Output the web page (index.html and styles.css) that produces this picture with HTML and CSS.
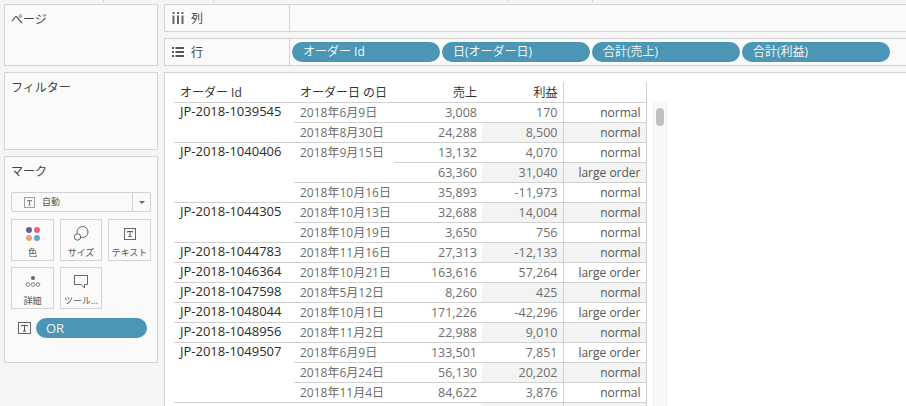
FILE: index.html
```html
<!DOCTYPE html>
<html lang="ja">
  <head>
    <meta charset="UTF-8" />
    <title>Tableau Sheet</title>
    <link rel="stylesheet" href="styles.css">
  </head>
  <body>
    <div class="ticks">
      <span class="tick tick-a"></span>
      <span class="tick tick-b"></span>
      <span class="tick tick-c"></span>
      <span class="tick tick-d"></span>
    </div>

    <div class="workspace">
      <div class="sidebar">
        <div class="card card-pages">ページ</div>
        <div class="card card-filters">フィルター</div>
        <div class="card card-marks">
          <div class="marks-title">マーク</div>
          <div class="mark-select">
            <svg class="select-icon" width="11" height="11" viewBox="0 0 11 11">
              <rect x="0.5" y="0.5" width="10" height="10" fill="none" stroke="#a0a0a0" />
              <path d="M3.5 3.5h4M5.5 3.5v4.5M4.5 8h2M3.5 3.5v1M7.5 3.5v1" fill="none" stroke="#777" />
            </svg>
            <span class="select-label">自動</span>
            <span class="select-arrow"><i></i></span>
          </div>
          <div class="mark-grid">
            <div class="mark-btn">
              <svg width="18" height="18" viewBox="0 0 18 18">
                <circle cx="5" cy="5" r="3" fill="#6f5b9c" />
                <circle cx="13" cy="5" r="3" fill="#e2637b" />
                <circle cx="5" cy="13" r="3" fill="#f1a56e" />
                <circle cx="13" cy="13" r="3" fill="#6b9fd1" />
              </svg>
              <span>色</span>
            </div>
            <div class="mark-btn">
              <svg width="18" height="18" viewBox="0 0 18 18">
                <circle cx="10.5" cy="7" r="5.5" fill="none" stroke="#666" />
                <circle cx="5.5" cy="12" r="3.2" fill="#fafafa" stroke="#666" />
              </svg>
              <span>サイズ</span>
            </div>
            <div class="mark-btn">
              <svg width="18" height="18" viewBox="0 0 18 18">
                <rect x="3.5" y="3.5" width="11" height="11" fill="none" stroke="#666" />
                <path d="M6.5 6.5h5M9 6.5v5M7.5 11.5h3M6.5 6.5v1M11.5 6.5v1" fill="none" stroke="#555" />
              </svg>
              <span>テキスト</span>
            </div>
            <div class="mark-btn">
              <svg width="18" height="18" viewBox="0 0 18 18">
                <circle cx="9" cy="5" r="2" fill="#666" />
                <circle cx="4" cy="11.5" r="1.8" fill="none" stroke="#666" stroke-width="0.8" />
                <circle cx="9" cy="11.5" r="1.8" fill="none" stroke="#666" stroke-width="0.8" />
                <circle cx="14" cy="11.5" r="1.8" fill="none" stroke="#666" stroke-width="0.8" />
              </svg>
              <span>詳細</span>
            </div>
            <div class="mark-btn">
              <svg width="18" height="18" viewBox="0 0 18 18">
                <path d="M2.5 2.5h13v9h-3v3.5l-3.5-3.5h-6.500z" fill="none" stroke="#666" />
              </svg>
              <span>ツール...</span>
            </div>
          </div>
          <div class="mark-field">
            <svg width="13" height="13" viewBox="0 0 13 13">
              <rect x="0.5" y="0.5" width="12" height="11" fill="none" stroke="#666" />
              <path d="M3.500 3.500h6M6.500 3.500v5.500M5 9h3M3.500 3.500v1M9.500 3.500v1" fill="none" stroke="#555" />
            </svg>
            <div class="pill pill-or">OR</div>
          </div>
        </div>
      </div>

      <div class="main">
        <div class="shelf">
          <div class="shelf-label">
            <svg width="12" height="12" viewBox="0 0 12 12">
              <path d="M1.500 0v2M6 0v2M10.500 0v2" stroke="#666" stroke-width="2" />
              <path d="M1.500 3.500v8.500M6 3.500v8.500M10.500 3.500v8.500" stroke="#666" stroke-width="2" />
            </svg>
            <span>列</span>
          </div>
          <div class="shelf-body"></div>
        </div>
        <div class="shelf">
          <div class="shelf-label">
            <svg width="12" height="12" viewBox="0 0 12 12">
              <path d="M0 2h2M0 6h2M0 10h2" stroke="#555" stroke-width="2" />
              <path d="M3.500 2h8.500M3.500 6h8.500M3.500 10h8.500" stroke="#555" stroke-width="2" />
            </svg>
            <span>行</span>
          </div>
          <div class="shelf-body">
            <div class="pill">オーダー Id</div>
            <div class="pill">日(オーダー日)</div>
            <div class="pill">合計(売上)</div>
            <div class="pill">合計(利益)</div>
          </div>
        </div>

        <div class="view">
          <table class="crosstab">
            <colgroup>
              <col class="col-id" />
              <col class="col-date" />
              <col class="col-sales" />
              <col class="col-profit" />
              <col class="col-flag" />
            </colgroup>
            <thead>
              <tr>
                <th class="left">オーダー Id</th>
                <th class="left">オーダー日 の日</th>
                <th>売上</th>
                <th>利益</th>
                <th class="flag"></th>
              </tr>
            </thead>
            <tbody>
              <tr>
                <td class="id" rowspan="2">JP-2018-1039545</td>
                <td class="date">2018年6月9日</td>
                <td>3,008</td><td class="shade">170</td><td class="shade flag">normal</td>
              </tr>
              <tr class="band">
                <td class="date">2018年8月30日</td>
                <td>24,288</td><td class="shade">8,500</td><td class="shade flag">normal</td>
              </tr>
              <tr>
                <td class="id" rowspan="3">JP-2018-1040406</td>
                <td class="date" rowspan="2">2018年9月15日</td>
                <td>13,132</td><td class="shade">4,070</td><td class="shade flag">normal</td>
              </tr>
              <tr class="band">
                <td>63,360</td><td class="shade">31,040</td><td class="shade flag">large order</td>
              </tr>
              <tr>
                <td class="date">2018年10月16日</td>
                <td>35,893</td><td class="shade">-11,973</td><td class="shade flag">normal</td>
              </tr>
              <tr class="band">
                <td class="id" rowspan="2">JP-2018-1044305</td>
                <td class="date">2018年10月13日</td>
                <td>32,688</td><td class="shade">14,004</td><td class="shade flag">normal</td>
              </tr>
              <tr>
                <td class="date">2018年10月19日</td>
                <td>3,650</td><td class="shade">756</td><td class="shade flag">normal</td>
              </tr>
              <tr class="band">
                <td class="id">JP-2018-1044783</td>
                <td class="date">2018年11月16日</td>
                <td>27,313</td><td class="shade">-12,133</td><td class="shade flag">normal</td>
              </tr>
              <tr>
                <td class="id">JP-2018-1046364</td>
                <td class="date">2018年10月21日</td>
                <td>163,616</td><td class="shade">57,264</td><td class="shade flag">large order</td>
              </tr>
              <tr class="band">
                <td class="id">JP-2018-1047598</td>
                <td class="date">2018年5月12日</td>
                <td>8,260</td><td class="shade">425</td><td class="shade flag">normal</td>
              </tr>
              <tr>
                <td class="id">JP-2018-1048044</td>
                <td class="date">2018年10月1日</td>
                <td>171,226</td><td class="shade">-42,296</td><td class="shade flag">large order</td>
              </tr>
              <tr class="band">
                <td class="id">JP-2018-1048956</td>
                <td class="date">2018年11月2日</td>
                <td>22,988</td><td class="shade">9,010</td><td class="shade flag">normal</td>
              </tr>
              <tr>
                <td class="id" rowspan="3">JP-2018-1049507</td>
                <td class="date">2018年6月9日</td>
                <td>133,501</td><td class="shade">7,851</td><td class="shade flag">large order</td>
              </tr>
              <tr class="band">
                <td class="date">2018年6月24日</td>
                <td>56,130</td><td class="shade">20,202</td><td class="shade flag">normal</td>
              </tr>
              <tr>
                <td class="date">2018年11月4日</td>
                <td>84,622</td><td class="shade">3,876</td><td class="shade flag">normal</td>
              </tr>
              <tr class="band">
                <td class="id"></td><td class="date"></td><td></td><td class="shade"></td><td class="shade flag"></td>
              </tr>
            </tbody>
          </table>
          <div class="scrollbar"><div class="scroll-thumb"></div></div>
        </div>
      </div>
    </div>
  </body>
</html>
```

FILE: styles.css
```css
* {
  margin: 0;
  padding: 0;
  box-sizing: border-box;
}

html,
body {
  height: 406px;
  overflow: hidden;
}

body {
  font-family: "Open Sans", "Noto Sans CJK JP", sans-serif;
  font-size: 12px;
  background: #f5f5f5;
  color: #444;
}

/* Leftover column ticks at the very top */
.ticks {
  height: 4px;
  display: flex;
  align-items: flex-start;
}

.tick {
  width: 1px;
  height: 2px;
  background: #d4d4d4;
}

.tick-a { margin-left: 103px; }
.tick-b { margin-left: 109px; }
.tick-c { margin-left: 293px; }
.tick-d { margin-left: 84px; }

.workspace {
  display: flex;
  gap: 6px;
  height: 402px;
  padding-left: 4px;
}

.sidebar {
  width: 154px;
  display: flex;
  flex-direction: column;
  gap: 6px;
}

.card {
  background: #fafafa;
  border: 1px solid #d4d4d4;
  padding: 6px;
  line-height: 18px;
}

.card-pages { height: 62px; }
.card-filters { height: 78px; }

.card-marks {
  height: 207px;
}

.marks-title {
  margin-bottom: 11px;
}

.mark-select {
  height: 20px;
  width: 140px;
  display: flex;
  align-items: center;
  background: #fafafa;
  border: 1px solid #d0d0d0;
  border-radius: 2px;
  font-size: 9px;
  color: #555;
}

.select-icon {
  margin-left: 12px;
}

.select-label {
  margin-left: 7px;
  flex: 1;
}

.select-arrow {
  width: 18px;
  height: 18px;
  border-left: 1px solid #d0d0d0;
  display: flex;
  align-items: center;
  justify-content: center;
}

.select-arrow i {
  border-left: 3px solid transparent;
  border-right: 3px solid transparent;
  border-top: 3px solid #666;
}

.mark-grid {
  display: grid;
  grid-template-columns: 43px 42px 43px;
  grid-auto-rows: 42px;
  gap: 6px;
  margin-top: 7px;
}

.mark-btn {
  border: 1px solid #d4d4d4;
  display: flex;
  flex-direction: column;
  align-items: center;
  padding-top: 5px;
  font-size: 9px;
  line-height: 12px;
  color: #555;
  white-space: nowrap;
}

.mark-btn span {
  margin-top: 4px;
}

.mark-field {
  display: flex;
  align-items: center;
  gap: 5px;
  margin: 9px 0 0 7px;
}

.pill {
  width: 148px;
  height: 20px;
  line-height: 20px;
  padding-left: 11px;
  background: #4a96b4;
  border-radius: 10px;
  color: #f2f7fa;
  white-space: nowrap;
}

.pill-or {
  width: 111px;
  padding-left: 10px;
  font-size: 13px;
}

.main {
  flex: 1;
  min-height: 0;
  display: flex;
  flex-direction: column;
  gap: 6px;
}

.shelf {
  flex: none;
  height: 28px;
  display: flex;
  background: #fafafa;
  border: 1px solid #d4d4d4;
  border-right: none;
}

.shelf-label {
  width: 125px;
  display: flex;
  align-items: center;
  gap: 7px;
  padding-left: 7px;
  border-right: 1px solid #d4d4d4;
}

.shelf-body {
  flex: 1;
  display: flex;
  align-items: center;
  gap: 2px;
  padding-left: 2px;
}

.view {
  flex: 1;
  min-height: 0;
  overflow: hidden;
  display: flex;
  align-items: flex-start;
  background: #fff;
  border-top: 1px solid #d4d4d4;
  border-left: 1px solid #d4d4d4;
  padding: 9px 0 0 9px;
}

.crosstab {
  width: 472px;
  flex: none;
  table-layout: fixed;
  border-collapse: collapse;
  color: #6e6e6e;
}

.col-id { width: 120px; }
.col-date { width: 100px; }
.col-sales { width: 88px; }
.col-profit { width: 81px; }
.col-flag { width: 83px; }

.crosstab th,
.crosstab td {
  height: 20px;
  padding: 2px 5px 0;
  text-align: right;
  font-size: 12.5px;
  font-weight: 400;
  line-height: 16px;
  vertical-align: top;
  white-space: nowrap;
  border-bottom: 1px solid #d0d0d0;
}

.crosstab th {
  padding-top: 3px;
  font-size: 12px;
  color: #333;
}

.crosstab .left,
.crosstab .id,
.crosstab .date {
  text-align: left;
  padding-left: 6px;
}

.crosstab .date {
  font-size: 12px;
}

.crosstab .id {
  padding-top: 0;
  color: #2b2b2b;
  font-size: 13px;
}

.crosstab .flag {
  padding-top: 1px;
  font-size: 12px;
  line-height: 18px;
  border-left: 1px solid #d0d0d0;
  border-right: 1px solid #d0d0d0;
  color: #555;
}

.band .shade {
  background: #f3f3f3;
}

.scrollbar {
  flex: none;
  width: 14px;
  height: 320px;
  margin: 20px 0 0 6px;
  padding: 6px 2px 0;
  background: #f8f8f8;
  border-left: 1px solid #efefef;
  border-right: 1px solid #efefef;
}

.scroll-thumb {
  width: 8px;
  height: 18px;
  background: #c0c0c0;
  border-radius: 4px;
}
```
